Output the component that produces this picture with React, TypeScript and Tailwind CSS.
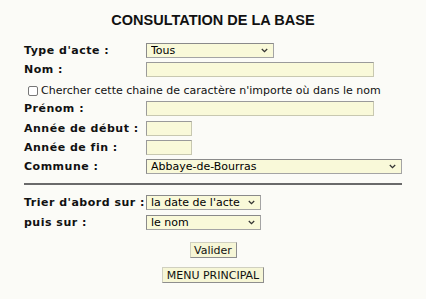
import React from "react";

const Chevron = () => (
  <svg width="7" height="5" viewBox="0 0 7 5" className="absolute right-[6px] top-[5px] pointer-events-none">
    <path d="M0.8 1 L3.5 3.6 L6.2 1" fill="none" stroke="#333" strokeWidth="1.3" />
  </svg>
);

function Sel({ w, value }: { w: string; value: string }) {
  return (
    <div className={`relative h-[15px] ${w}`}>
      <select
        defaultValue={value}
        className="block appearance-none w-full h-[15px] bg-[#f9f9d9] border border-[#a4a4a4] border-t-[#8a8a8a] border-l-[#8a8a8a] text-[11px] leading-[13px] py-0 pl-[4px] pr-[14px] text-black outline-none"
        style={{ fontFamily: "Verdana, 'DejaVu Sans', sans-serif" }}
      >
        <option>{value}</option>
      </select>
      <Chevron />
    </div>
  );
}

function Inp({ w }: { w: string }) {
  return (
    <input
      type="text"
      className={`block h-[15px] ${w} bg-[#f9f9d9] border border-[#c8c8b0] border-t-[#9a9a9a] border-l-[#9a9a9a] outline-none`}
    />
  );
}

function Row({ label, children, h = "h-[19px]" }: { label: string; children: React.ReactNode; h?: string }) {
  return (
    <div className={`flex items-center ${h}`}>
      <div className="w-[122px] font-bold text-[11px] leading-[13px] tracking-[0.5px] text-[#111] whitespace-nowrap">
        {label}
      </div>
      {children}
    </div>
  );
}

function Btn({ w, children }: { w: string; children: React.ReactNode }) {
  return (
    <button
      className={`${w} h-[16px] flex items-center justify-center bg-[#f6f6d6] border border-[#d0d0c0] border-r-[#8e8e8e] border-b-[#8e8e8e] text-[11px] leading-none text-[#111]`}
    >
      {children}
    </button>
  );
}

export default function App() {
  return (
    <div
      className="w-[426px] h-[299px] bg-[#fbfbf7] flex flex-col items-center"
      style={{ fontFamily: "Verdana, 'DejaVu Sans', sans-serif" }}
    >
      <h1
        className="mt-[12px] h-[17px] text-[14.5px] leading-[17px] font-bold text-[#111]"
        style={{ fontFamily: "'Liberation Sans', Arial, sans-serif" }}
      >
        CONSULTATION DE LA BASE
      </h1>
      <div className="w-[378px] mt-[12px] flex flex-col">
        <Row label="Type d'acte :">
          <Sel w="w-[128px]" value="Tous" />
        </Row>
        <Row label="Nom :">
          <Inp w="w-[228px]" />
        </Row>
        <div className="flex items-center h-[20px] pt-[3px] pl-[4px] gap-[3px]">
          <span className="w-[10px] h-[10px] border border-[#777] rounded-[2px] bg-white" />
          <span className="text-[11px] leading-[13px] text-[#111] whitespace-nowrap">
            Chercher cette chaine de caractère n'importe où dans le nom
          </span>
        </div>
        <Row label="Prénom :">
          <Inp w="w-[228px]" />
        </Row>
        <Row label="Année de début :" h="h-[20px]">
          <Inp w="w-[46px]" />
        </Row>
        <Row label="Année de fin :">
          <Inp w="w-[46px]" />
        </Row>
        <Row label="Commune :">
          <Sel w="w-[256px]" value="Abbaye-de-Bourras" />
        </Row>
        <div className="mt-[7px] h-[2px] bg-[#6a6a6a]" />
        <div className="mt-[8px] flex flex-col gap-[1px]">
          <Row label="Trier d'abord sur :">
            <Sel w="w-[115px]" value="la date de l'acte" />
          </Row>
          <Row label="puis sur :">
            <Sel w="w-[115px]" value="le nom" />
          </Row>
        </div>
      </div>
      <div className="mt-[10px]">
        <Btn w="w-[47px]">Valider</Btn>
      </div>
      <div className="mt-[9px]">
        <Btn w="w-[102px]">MENU PRINCIPAL</Btn>
      </div>
    </div>
  );
}
